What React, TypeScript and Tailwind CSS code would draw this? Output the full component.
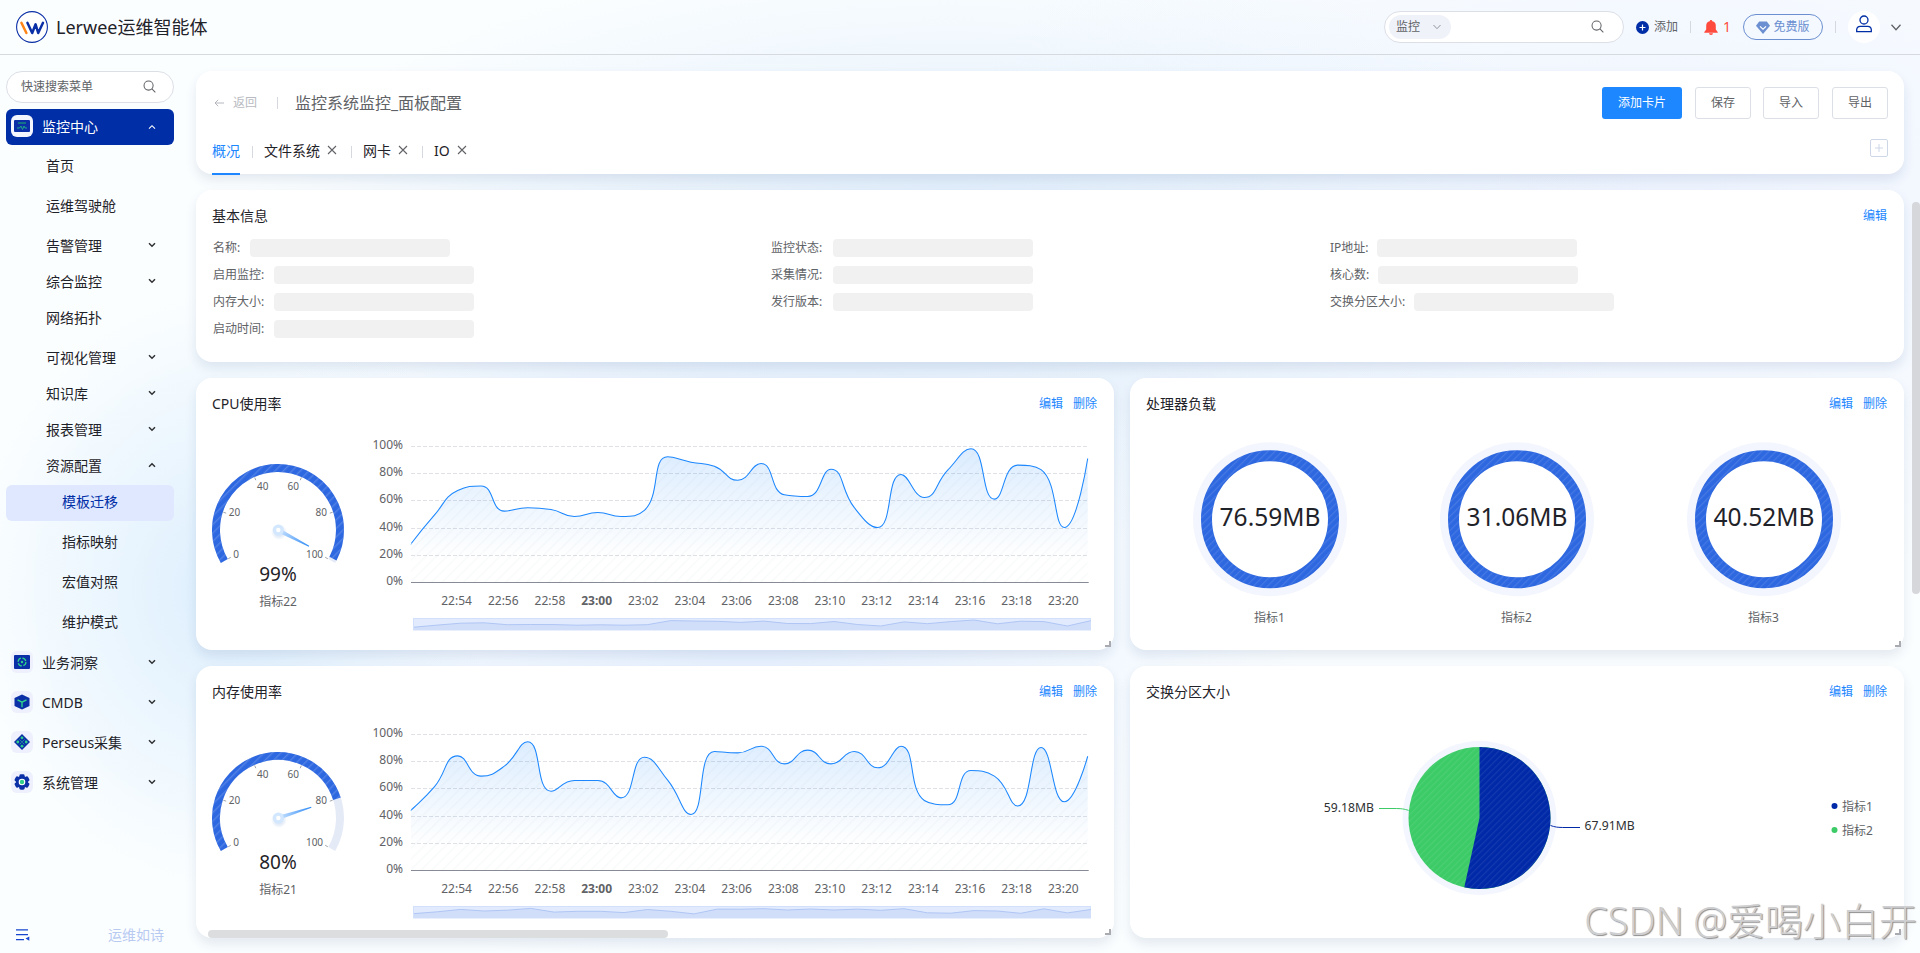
import { ReactNode, useId } from 'react';
import clsx from 'clsx';

type MenuItem = {
    label: string;
    className?: string;
    arrow?: 'up' | 'down';
    active?: boolean;
};

const subMenu: MenuItem[] = [
    { label: '首页', className: 'mt-[3px] mb-1' },
    { label: '运维驾驶舱', className: 'mb-1' },
    { label: '告警管理', arrow: 'down' },
    { label: '综合监控', arrow: 'down' },
    { label: '网络拓扑', className: 'mb-1' },
    { label: '可视化管理', arrow: 'down' },
    { label: '知识库', arrow: 'down' },
    { label: '报表管理', arrow: 'down' },
    { label: '资源配置', arrow: 'up' },
];

const leafMenu: MenuItem[] = [
    { label: '模板迁移', active: true, className: 'mt-px mb-[3px] pb-[2px]' },
    { label: '指标映射', className: 'mb-1' },
    { label: '宏值对照', className: 'mb-1' },
    { label: '维护模式', className: 'mb-[5px]' },
];

const infoColumns = [
    [
        { label: '名称:', width: 'w-[37px]' },
        { label: '启用监控:', width: 'w-[61px]' },
        { label: '内存大小:', width: 'w-[61px]' },
        { label: '启动时间:', width: 'w-[61px]' },
    ],
    [
        { label: '监控状态:', width: 'w-[62px]' },
        { label: '采集情况:', width: 'w-[62px]' },
        { label: '发行版本:', width: 'w-[62px]' },
    ],
    [
        { label: 'IP地址:', width: 'w-[47px]' },
        { label: '核心数:', width: 'w-[48px]' },
        { label: '交换分区大小:', width: 'w-[84px]' },
    ],
];

const cpuData = [28.4, 49.5, 67.6, 71, 52.5, 55, 53.7, 48.5, 51.5, 48.5, 53, 92.4, 88.5, 85.5, 75.2, 87.5, 64.5, 63.2, 83.3, 55, 40.4, 79.4, 62.5, 82.6, 98.3, 61.3, 86.3, 83, 40.4, 91.2];
const memData = [44.4, 61.5, 84.3, 69.4, 76.7, 94.6, 58.3, 66.2, 66.2, 53.4, 83.3, 66.4, 41.2, 87.5, 86.5, 91.4, 78.4, 88.5, 78.4, 87.5, 75.5, 91.4, 51.5, 48.3, 73.5, 69.4, 47.5, 90.4, 50.5, 84];

const times = ['22:54', '22:56', '22:58', '23:00', '23:02', '23:04', '23:06', '23:08', '23:10', '23:12', '23:14', '23:16', '23:18', '23:20'];

const clamp = (v: number, a: number, b: number) => Math.max(Math.min(v, Math.max(a, b)), Math.min(a, b));

// Smoothed line that never overshoots its neighbouring points
function smoothPath(pts: number[][], smooth = 0.5) {
    let d = `M${pts[0][0]},${pts[0][1]}`;
    let [c0x, c0y] = pts[0];
    for (let i = 1; i < pts.length; i++) {
        const [x, y] = pts[i];
        const [px, py] = pts[i - 1];
        if (i === pts.length - 1) {
            d += `C${c0x},${c0y} ${x},${y} ${x},${y}`;
            break;
        }
        const [nx, ny] = pts[i + 1];
        const lenPrev = Math.hypot(x - px, y - py);
        const lenNext = Math.hypot(nx - x, ny - y);
        const ratio = lenNext / (lenNext + lenPrev);
        let n0x = clamp(x + (nx - px) * smooth * ratio, nx, x);
        let n0y = clamp(y + (ny - py) * smooth * ratio, ny, y);
        const c1x = clamp(x - ((n0x - x) * lenPrev) / lenNext, px, x);
        const c1y = clamp(y - ((n0y - y) * lenPrev) / lenNext, py, y);
        n0x = x + ((x - c1x) * lenNext) / lenPrev;
        n0y = y + ((y - c1y) * lenNext) / lenPrev;
        d += `C${c0x.toFixed(2)},${c0y.toFixed(2)} ${c1x.toFixed(2)},${c1y.toFixed(2)} ${x},${y}`;
        c0x = n0x;
        c0y = n0y;
    }
    return d;
}

function Stripes({ id, gap = 6, color = '#fff', opacity = 0.16, width = 1.4 }: { id: string; gap?: number; color?: string; opacity?: number; width?: number }) {
    return (
        <pattern id={id} width={gap} height={gap} patternUnits="userSpaceOnUse" patternTransform="rotate(45)">
            <rect width={width} height={gap} fill={color} fillOpacity={opacity} />
        </pattern>
    );
}

function Chevron({ up, className }: { up?: boolean; className?: string }) {
    return (
        <svg viewBox="0 0 8 6" className={clsx('mb-[2px] h-[6px] w-2 shrink-0', className)} fill="none" stroke="currentColor" strokeWidth="1.5">
            <path d={up ? 'M1 4.7 4 1.7 7 4.7' : 'M1 1.2 4 4.2 7 1.2'} />
        </svg>
    );
}

function SearchIcon() {
    return (
        <svg viewBox="0 0 14 14" className="mb-[2px] size-[13px]" fill="none" stroke="#606266" strokeWidth="1.1">
            <circle cx="6" cy="6" r="4.9" />
            <path d="m9.6 9.6 3.7 3.7" />
        </svg>
    );
}

function Header() {
    return (
        <header className="flex h-[55px] shrink-0 items-center border-b border-[#d6d9de] pl-4">
            <svg viewBox="0 0 32 32" className="size-8" fill="none">
                <circle cx="16" cy="16" r="15.4" fill="#fff" stroke="#0a2fa6" strokeWidth="1.1" />
                <g strokeWidth="2.5" strokeLinecap="round" strokeLinejoin="round">
                    <path d="m5.4 11.8 5 10.200" stroke="#ff8417" />
                    <path d="m11.400 11.800 4.800 10.200 3.400-8.700 2.600 8.700 4.800-10.200" stroke="#0a2fa6" />
                </g>
            </svg>
            <span className="ml-2 pb-px text-lg text-[#1f2329]">Lerwee运维智能体</span>

            <div className="ml-auto flex h-full items-center">
                <div className="flex h-8 w-[240px] items-center rounded-full border border-[#dcdfe6] bg-white pl-1">
                    <div className="flex h-6 w-[62px] items-center rounded-full bg-[#f0f2fa] pl-[7px]">
                        <span className="text-xs text-[#606266]">监控</span>
                        <svg viewBox="0 0 8 6" className="ml-[13px] h-[6px] w-2" fill="none" stroke="#8f939b" strokeWidth="1"><path d="M.5 1 4 4.7 7.5 1" /></svg>
                    </div>
                    <div className="ml-auto mr-[19px]"><SearchIcon /></div>
                </div>
                <svg viewBox="0 0 14 14" className="ml-3 size-[13px]">
                    <circle cx="7" cy="7" r="7" fill="#002ea6" />
                    <path d="M3.8 7h6.4M7 3.8v6.4" stroke="#fff" strokeWidth="1.3" />
                </svg>
                <span className="ml-[5px] text-xs text-[#606266]">添加</span>
                <i className="ml-3 h-3 w-px bg-[#d5d8de]" />
                <svg viewBox="0 0 14 15" className="ml-[13px] h-[15px] w-[14px]" fill="#ff4b3e">
                    <path d="M7 0a1.3 1.3 0 0 1 1.3 1.2A4.6 4.6 0 0 1 11.8 5.7V9.400l1.9 2.500a.5.5 0 0 1-.4.8H.7a.5.5 0 0 1-.4-.8L2.200 9.400V5.700A4.600 4.600 0 0 1 5.700 1.200 1.300 1.300 0 0 1 7 0ZM5 13.300h4a2 1.700 0 0 1-4 0Z" />
                </svg>
                <span className="ml-[5px] text-sm leading-none text-[#ff4b3e]">1</span>
                <div className="ml-3 flex h-[26px] w-20 items-center justify-center gap-[3px] rounded-full border border-[#6b8fd0] text-xs text-[#6b8fd0]">
                    <svg viewBox="0 0 14 13" className="h-[13px] w-[14px]">
                        <path d="M3.200.5h7.600L14 4.800 7 13 0 4.800Z" fill="#6b8fd0" />
                        <path d="m4 5.400 3 2.800 3-2.800" fill="none" stroke="#fff" strokeWidth="1.200" />
                    </svg>
                    免费版
                </div>
                <i className="ml-3 h-3 w-px bg-[#d5d8de]" />
                <div className="ml-3 flex size-8 items-center justify-center rounded-full bg-white pb-[6px]">
                    <svg viewBox="0 0 16 18" className="h-[18px] w-4" fill="none" stroke="#002ea6" strokeWidth="1.300">
                        <circle cx="8" cy="5" r="4" />
                        <path d="M.7 16.700v-2.200a3.500 3.500 0 0 1 3.500-3.200h7.600a3.500 3.500 0 0 1 3.500 3.200v2.200Z" />
                    </svg>
                </div>
                <svg viewBox="0 0 10 7" className="mr-[19px] ml-[11px] h-[7px] w-[10px]" fill="none" stroke="#606266" strokeWidth="1.300"><path d="m.5.800 4.500 5 4.500-5" /></svg>
            </div>
        </header>
    );
}

function GroupIcon({ children, active }: { children: ReactNode; active?: boolean }) {
    return (
        <span className={clsx('mb-[2px] ml-[5px] flex size-[22px] items-center justify-center rounded-[6px]', active ? 'bg-[#f3f6ff]' : 'bg-[#eef1fd]')}>
            <svg viewBox="0 0 16 16" className="size-4">{children}</svg>
        </span>
    );
}

function GroupRow({ label, icon, className }: { label: string; icon: ReactNode; className?: string }) {
    return (
        <div className={clsx('flex h-9 items-center', className)}>
            <GroupIcon>{icon}</GroupIcon>
            <span className="ml-[9px] text-sm text-[#1f2329]">{label}</span>
            <Chevron className="mr-[18px] ml-auto text-[#303133]" />
        </div>
    );
}

function Sidebar() {
    return (
        <aside className="flex w-[180px] shrink-0 flex-col pt-4 pr-[6px] pl-[6px] text-[#1f2329]">
            <div className="flex h-8 shrink-0 items-center justify-between rounded-full border border-[#dcdfe6] bg-white pr-[17px] pl-[14px]">
                <span className="text-xs text-[#606266]">快速搜索菜单</span>
                <SearchIcon />
            </div>
            <div className="mt-[6px] flex h-9 shrink-0 items-center rounded-md bg-[#002ea6] text-white">
                <GroupIcon active>
                    <rect y="2" width="16" height="12" rx="1" fill="#0a2fa6" />
                    <path d="M4 5h8" stroke="#17907c" strokeWidth="1.400" />
                    <path d="M3 10h2.500l1.500-2 1.500 3.500 1.500-3.500 1 2H13" fill="none" stroke="#1fa98a" strokeWidth="1" />
                </GroupIcon>
                <span className="ml-[9px] text-sm">监控中心</span>
                <svg viewBox="0 0 8 6" className="mr-[18px] ml-auto h-[6px] w-2" fill="none" stroke="#fff" strokeWidth="1.100"><path d="M1 4.700 4 1.700 7 4.700" /></svg>
            </div>
            {subMenu.map(item => (
                <div key={item.label} className={clsx('flex h-9 shrink-0 items-center pr-[18px] pl-10 text-sm', item.className)}>
                    {item.label}
                    {item.arrow && <Chevron up={item.arrow === 'up'} className="ml-auto text-[#303133]" />}
                </div>
            ))}
            {leafMenu.map(item => (
                <div
                    key={item.label}
                    className={clsx('flex h-9 shrink-0 items-center rounded-md pl-14 text-sm', item.className, item.active && 'bg-[#dfe8fe] text-[#002ea6]')}
                >
                    {item.label}
                </div>
            ))}
            <GroupRow
                label="业务洞察"
                className="mb-1"
                icon={
                    <>
                        <rect y="1" width="16" height="14" rx="1" fill="#0a2fa6" />
                        <circle cx="8" cy="8" r="3.900" fill="none" stroke="#2fd08a" strokeWidth="1.300" strokeDasharray="4.600 1.500" />
                        <circle cx="8" cy="8" r="1.200" fill="#2fd08a" />
                    </>
                }
            />
            <GroupRow
                label="CMDB"
                className="mb-1"
                icon={
                    <>
                        <path d="m8 .5 7.500 3.500v8L8 15.500.5 12V4Z" fill="#0a2fa6" />
                        <path d="m3.500 5.800 4.500 2.400 4.500-2.400M8 8.200v5" fill="none" stroke="#2fd08a" strokeWidth="1.400" />
                    </>
                }
            />
            <GroupRow
                label="Perseus采集"
                className="mb-1"
                icon={
                    <>
                        <path d="m8 0 8 8-8 8-8-8Z" fill="#0a2fa6" />
                        <g fill="#2fd08a">
                            <circle cx="8" cy="3.800" r="1.400" />
                            <circle cx="8" cy="12.200" r="1.400" />
                            <circle cx="3.800" cy="8" r="1.400" />
                            <circle cx="12.200" cy="8" r="1.400" />
                        </g>
                        <path d="M5.500 5.500 10.500 10.500M10.500 5.500l-5 5" stroke="#2fd08a" strokeWidth=".8" strokeDasharray="1.600 1" />
                    </>
                }
            />
            <GroupRow
                label="系统管理"
                icon={
                    <>
                        <g fill="#0a2fa6">
                            <circle cx="8" cy="8" r="6.200" />
                            <rect x="5.400" y=".3" width="5.200" height="15.400" rx="1.400" />
                            <rect x="5.400" y=".3" width="5.200" height="15.400" rx="1.400" transform="rotate(60 8 8)" />
                            <rect x="5.400" y=".3" width="5.200" height="15.400" rx="1.400" transform="rotate(120 8 8)" />
                        </g>
                        <circle cx="8" cy="8" r="3.300" fill="#fff" />
                        <circle cx="8" cy="8" r="2.200" fill="#2fd08a" />
                    </>
                }
            />
            <div className="mt-auto mb-2 flex items-center justify-between pr-[10px] pl-[10px]">
                <svg viewBox="0 0 14 12" className="h-3 w-[14px]" fill="none" stroke="#1646cf" strokeWidth="1.300">
                    <path d="M0 .8h12M0 5.700h12M0 10.700h8" />
                    <path d="m13.300 7.500-3.800 2.100 3.800 2.200Z" fill="#1646cf" stroke="none" />
                </svg>
                <span className="text-sm text-[#b8caf2]">运维如诗</span>
            </div>
        </aside>
    );
}

function CloseIcon() {
    return (
        <svg viewBox="0 0 10 10" className="mb-[2px] ml-[7px] size-[10px]" stroke="#606266" strokeWidth="1.100"><path d="m1 1 8 8M9 1 1 9" /></svg>
    );
}

function TabDivider({ className }: { className: string }) {
    return <i className={clsx('mt-px h-3 w-px bg-[#d5d8de]', className)} />;
}

function PageHead() {
    const btn = 'flex h-8 items-center justify-center rounded-[3px] border border-[#dcdfe6] w-14 text-[#606266]';
    return (
        <section className="h-[103px] shrink-0 rounded-2xl bg-white px-4 pt-4 shadow-[0_6px_12px_rgba(20,50,110,0.10)]">
            <div className="flex h-8 items-center text-xs">
                <svg viewBox="0 0 10 8" className="ml-[2px] h-2 w-[10px]" fill="none" stroke="#b4b7bd"><path d="M10 4H1M4.200.800 1 4l3.200 3.200" /></svg>
                <span className="ml-[9px] text-[#b8bbc1]">返回</span>
                <i className="ml-5 h-3 w-px bg-[#d5d8de]" />
                <span className="ml-[17px] text-base text-[#606266]">监控系统监控_面板配置</span>
                <div className="ml-auto flex">
                    <div className="flex h-8 w-20 items-center justify-center rounded-[3px] bg-[#1c87ff] text-white">添加卡片</div>
                    <div className={clsx(btn, 'ml-[13px]')}>保存</div>
                    <div className={clsx(btn, 'ml-3')}>导入</div>
                    <div className={clsx(btn, 'ml-[13px]')}>导出</div>
                </div>
            </div>
            <div className="mt-2 flex h-12 items-center text-sm text-[#1f2329]">
                <div className="flex h-full items-center border-b-2 border-[#1c87ff] pt-px text-[#1c87ff]">概况</div>
                <TabDivider className="ml-3 mr-[11px]" />
                文件系统
                <CloseIcon />
                <TabDivider className="ml-[14px] mr-[11px]" />
                网卡
                <CloseIcon />
                <TabDivider className="ml-[14px] mr-[11px]" />
                IO
                <CloseIcon />
                <svg viewBox="0 0 18 18" className="mb-[6px] ml-auto size-[18px]" fill="none" stroke="#cdd7e8">
                    <rect x=".5" y=".5" width="17" height="17" rx="1.500" />
                    <path d="M5 9h8M9 5v8" />
                </svg>
            </div>
        </section>
    );
}

function BasicInfo() {
    return (
        <section className="mt-4 h-[172px] shrink-0 rounded-2xl bg-white px-4 shadow-[0_6px_12px_rgba(20,50,110,0.10)]">
            <div className="flex h-11 items-end justify-between pb-2">
                <span className="text-sm text-[#1f2329]">基本信息</span>
                <span className="pr-px text-xs leading-5 text-[#1c87ff]">编辑</span>
            </div>
            <div className="grid grid-cols-[558px_559px_1fr] pl-px">
                {infoColumns.map((col, i) => (
                    <div key={i}>
                        {col.map(row => (
                            <div key={row.label} className="flex h-[27px] items-center text-xs text-[#606266]">
                                <span className={clsx('shrink-0 whitespace-nowrap', row.width)}>{row.label}</span>
                                <span className="h-[18px] w-[200px] rounded bg-[#f1f1f1]" />
                            </div>
                        ))}
                    </div>
                ))}
            </div>
        </section>
    );
}

function Card({ title, children, className }: { title: string; children: ReactNode; className?: string }) {
    return (
        <section className={clsx('relative h-[272px] rounded-2xl bg-white shadow-[0_6px_12px_rgba(20,50,110,0.10)]', className)}>
            <div className="flex h-[52px] items-center justify-between px-4">
                <span className="text-sm text-[#1f2329]">{title}</span>
                <span className="flex gap-[10px] pr-px text-xs text-[#1c87ff]">
                    <span>编辑</span>
                    <span>删除</span>
                </span>
            </div>
            {children}
            <i className="absolute right-[3px] bottom-[3px] size-[6px] border-r-2 border-b-2 border-[#a9abb0]" />
        </section>
    );
}

const polar = (cx: number, cy: number, r: number, deg: number) => {
    const a = (deg * Math.PI) / 180;
    return [cx + r * Math.cos(a), cy - r * Math.sin(a)];
};

function Gauge({ value, name }: { value: number; name: string }) {
    const id = useId();
    const cx = 82, cy = 100;
    const angle = (v: number) => 210 - v * 2.4;
    const arc = (from: number, to: number) => {
        const [x0, y0] = polar(cx, cy, 62, angle(from));
        const [x1, y1] = polar(cx, cy, 62, angle(to));
        return `M${x0},${y0}A62,62 0 ${(to - from) * 2.4 > 180 ? 1 : 0} 1 ${x1},${y1}`;
    };
    const labels: [number, number, number][] = [[0, 40, 124.500], [20, 38.5, 82.300], [40, 66.700, 56], [60, 97.300, 56], [80, 125.300, 82.300], [100, 118.500, 124.500]];

    return (
        <svg width="164" height="220" viewBox="0 0 164 220" className="shrink-0">
            <defs>
                <Stripes id={id + 's'} gap={6} />
                <linearGradient id={id + 'n'} x1="0" x2="1">
                    <stop offset="0" stopColor="#cfe5ff" />
                    <stop offset="1" stopColor="#2f8bf5" />
                </linearGradient>
                <radialGradient id={id + 'h'}>
                    <stop offset=".5" stopColor="#3c78c8" stopOpacity=".16" />
                    <stop offset="1" stopColor="#3c78c8" stopOpacity="0" />
                </radialGradient>
            </defs>
            <path d={arc(0, 100)} fill="none" stroke="#e5eaf7" strokeWidth="8" />
            <path d={arc(0, value)} fill="none" stroke="#2e68e0" strokeWidth="8" />
            <path d={arc(0, value)} fill="none" stroke={`url(#${id}s)`} strokeWidth="8" />
            {labels.map(([v, x, y]) => {
                const [x0, y0] = polar(cx, cy, 57.500, angle(v));
                const [x1, y1] = polar(cx, cy, 54.500, angle(v));
                return (
                    <g key={v}>
                        <path d={`M${x0},${y0}L${x1},${y1}`} stroke="#8a8d93" strokeWidth=".8" />
                        <text x={x} y={y + 3.600} textAnchor="middle" fontSize="10" fill="#606266">{v}</text>
                    </g>
                );
            })}
            <circle cx={cx + 1} cy={cy + 2} r="8" fill={`url(#${id}h)`} />
            <g transform={`rotate(${-angle(value)} ${cx} ${cy})`}>
                <path d={`M${cx},${cy - 2.200}L${cx + 35},${cy - 0.500}V${cy + 0.500}L${cx},${cy + 2.200}Z`} fill={`url(#${id}n)`} />
            </g>
            <circle cx={cx + 0.300} cy={cy} r="5.500" fill="#d3e7fe" />
            <circle cx={cx + 0.300} cy={cy} r="2.200" fill="#fff" />
            <text x={cx} y="150.500" textAnchor="middle" fontSize="19" fill="#1f2329">{value}%</text>
            <text x={cx} y="176" textAnchor="middle" fontSize="12" fill="#606266">{name}</text>
        </svg>
    );
}

function LineChart({ data }: { data: number[] }) {
    const id = useId();
    const left = 51, right = 727.700, top = 16.500, bottom = 152.500;
    const step = (right - left) / (data.length - 1);
    const line = smoothPath(data.map((v, i) => [left + i * step, bottom - (v / 100) * (bottom - top)]));
    const area = `${line}V${bottom}H${left}Z`;
    const mini = data.map((v, i) => `${(54 + i * step).toFixed(1)},${(200.200 - v * 0.104).toFixed(1)}`).join('L');

    return (
        <svg width="754" height="220" viewBox="0 0 754 220" className="shrink-0">
            <defs>
                <Stripes id={id + 's'} gap={7.500} color="#6b7688" opacity={0.04} width={1.500} />
                <linearGradient id={id + 'g'} x1="0" x2="0" y1={top} y2={bottom} gradientUnits="userSpaceOnUse">
                    <stop offset="0" stopColor="#1c87ff" stopOpacity=".16" />
                    <stop offset=".82" stopColor="#1c87ff" stopOpacity="0" />
                </linearGradient>
            </defs>
            {[0, 20, 40, 60, 80, 100].map(v => {
                const y = Math.round(bottom - v * 1.360 - 0.5) + 0.5;
                return (
                    <g key={v}>
                        <text x="43" y={y + 2.500} textAnchor="end" fontSize="12" fill="#606266">{v}%</text>
                        {v > 0 && <path d={`M${left},${y}H${right}`} stroke="#dfe1e6" strokeDasharray="4 2" />}
                    </g>
                );
            })}
            <path d={area} fill={`url(#${id}g)`} />
            <path d={area} fill={`url(#${id}s)`} />
            <path d={line} fill="none" stroke="#1c87ff" strokeWidth="1.050" />
            <path d={`M${left},${bottom}H${right + 1}`} stroke="#868b96" />
            {times.map((t, i) => (
                <text key={t} x={96.600 + i * 46.670} y="174.700" textAnchor="middle" fontSize="12" fontWeight={t === '23:00' ? 700 : 400} fill="#606266">{t}</text>
            ))}
            <rect x="53.500" y="188.500" width="677" height="11.500" fill="#e1ebfd" stroke="#d3e0fb" />
            <path d={`M${mini}V200H54Z`} fill="#d1defa" />
            <path d={`M${mini}`} fill="none" stroke="#aac2f3" strokeWidth=".9" />
        </svg>
    );
}

function Ring({ value, name }: { value: string; name: string }) {
    const id = useId();
    return (
        <svg width="247" height="220" viewBox="0 0 247 220">
            <defs><Stripes id={id + 's'} gap={5} opacity={0.11} width={1.200} /></defs>
            <circle cx="123" cy="89.300" r="77" fill="#f3f6fe" />
            <circle cx="123" cy="89.300" r="63.500" fill="#fff" stroke="#2e68e0" strokeWidth="11" />
            <circle cx="123" cy="89.300" r="63.500" fill="none" stroke={`url(#${id}s)`} strokeWidth="11" />
            <text x="123" y="95.500" textAnchor="middle" fontSize="24.500" fill="#1f2329">{value}</text>
            <text x="122.500" y="192" textAnchor="middle" fontSize="12" fill="#606266">{name}</text>
        </svg>
    );
}

function Pie() {
    const id = useId();
    const cx = 349.500, cy = 100, r = 71;
    const [x, y] = polar(cx, cy, r, 90 - (67.910 / 127.090) * 360);
    return (
        <svg width="774" height="220" viewBox="0 0 774 220">
            <defs><Stripes id={id + 's'} gap={4.500} opacity={0.08} width={1.200} /></defs>
            <circle cx={cx} cy={cy} r="77" fill="#f3f6fe" />
            <circle cx={cx} cy={cy} r={r} fill="#3ccb67" />
            <path d={`M${cx},${cy}V${cy - r}A${r},${r} 0 1 1 ${x},${y}Z`} fill="#0029a8" />
            <circle cx={cx} cy={cy} r={r} fill={`url(#${id}s)`} />
            <path d="M278.700 92.400C274 91 272 90.500 264 90.500H249" fill="none" stroke="#3ccb67" />
            <path d="M420.500 107.500C425 109 427 109.500 435 109.500H450" fill="none" stroke="#0029a8" />
            <text x="244" y="93.700" textAnchor="end" fontSize="12.200" fill="#303133">59.18MB</text>
            <text x="454.500" y="112.300" fontSize="12.200" fill="#303133">67.91MB</text>
            <circle cx="704.500" cy="88" r="3" fill="#0029a8" />
            <text x="712" y="92.500" fontSize="12" fill="#606266">指标1</text>
            <circle cx="704.500" cy="112" r="3" fill="#3ccb67" />
            <text x="712" y="116.500" fontSize="12" fill="#606266">指标2</text>
        </svg>
    );
}

export default function App() {
    return (
        <div className="relative flex h-[953px] w-[1920px] flex-col overflow-hidden bg-[#fbfeff] bg-[radial-gradient(ellipse_260px_300px_at_230px_590px,#dceefd,transparent),radial-gradient(ellipse_720px_300px_at_950px_250px,#dcebfa,transparent),radial-gradient(ellipse_700px_400px_at_1650px_200px,#eef4ff,transparent),radial-gradient(ellipse_560px_400px_at_750px_600px,#e4effe,transparent)] font-['Noto_Sans','Noto_Sans_CJK_SC',sans-serif]">
            <Header />
            <div className="flex min-h-0 flex-1">
                <Sidebar />
                <main className="flex flex-1 flex-col pt-4 pr-4 pl-4">
                    <PageHead />
                    <BasicInfo />
                    <div className="mt-4 grid shrink-0 grid-cols-[918px_774px] gap-4">
                        <Card title="CPU使用率">
                            <div className="flex">
                                <Gauge value={99} name="指标22" />
                                <LineChart data={cpuData} />
                            </div>
                        </Card>
                        <Card title="处理器负载">
                            <div className="flex justify-center">
                                <Ring value="76.59MB" name="指标1" />
                                <Ring value="31.06MB" name="指标2" />
                                <Ring value="40.52MB" name="指标3" />
                            </div>
                        </Card>
                        <Card title="内存使用率">
                            <div className="flex">
                                <Gauge value={80} name="指标21" />
                                <LineChart data={memData} />
                            </div>
                        </Card>
                        <Card title="交换分区大小">
                            <Pie />
                        </Card>
                    </div>
                </main>
            </div>

            {/* Scrollbars */}
            <div className="absolute top-[202px] right-0 h-[392px] w-2 rounded bg-[#d5d7db]" />
            <div className="absolute bottom-[15px] left-[208px] h-2 w-[460px] rounded bg-[#dcdddf]" />

            <div className="absolute right-[3px] bottom-[6px] text-[38px] leading-[54px] font-light whitespace-nowrap text-[#cfcfd1] [text-shadow:1px_1px_1px_#8d8d8d]">
                CSDN @爱喝小白开
            </div>
        </div>
    );
}
